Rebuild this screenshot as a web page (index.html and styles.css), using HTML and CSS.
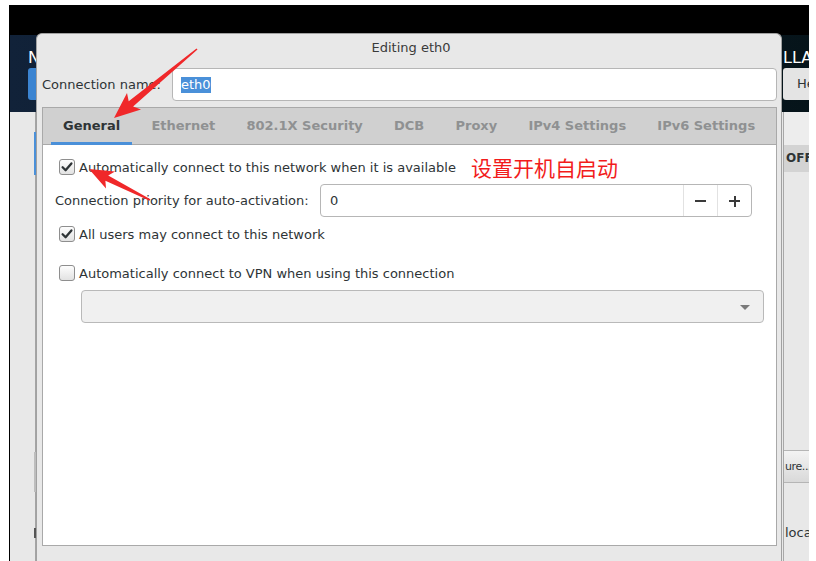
FILE: index.html
```html
<!DOCTYPE html>
<html>
<head>
<meta charset="utf-8">
<title>Editing eth0</title>
<link rel="stylesheet" href="styles.css">
</head>
<body>
<div class="frame">
  <div class="installer">
    <header class="inst-head">
      <div class="head-left">
        <div class="head-title">NETWORK &amp; HOST NAME</div>
        <div class="done-btn">Done</div>
      </div>
      <div class="head-right">
        <div class="head-title">LLATION</div>
        <div class="help-btn">Help!</div>
      </div>
    </header>
    <div class="inst-body">
      <div class="left-pane">
        <div class="mark mark-blue"></div>
        <div class="mark mark-grey"></div>
        <div class="mark mark-dark"></div>
      </div>
      <div class="center-pane"></div>
      <div class="right-pane">
        <div class="rp-top"></div>
        <div class="rp-head">OFF</div>
        <div class="rp-fill"></div>
        <div class="rp-btn">ure...</div>
        <div class="rp-text">localhost</div>
      </div>
    </div>
  </div>

  <div class="dialog">
    <div class="titlebar">Editing eth0</div>
    <div class="name-row">
      <div class="name-label">Connection name:</div>
      <div class="name-input"><span class="sel">eth0</span></div>
    </div>
    <div class="notebook">
      <div class="tabs">
        <div class="tab active">General</div>
        <div class="tab">Ethernet</div>
        <div class="tab">802.1X Security</div>
        <div class="tab">DCB</div>
        <div class="tab">Proxy</div>
        <div class="tab">IPv4 Settings</div>
        <div class="tab">IPv6 Settings</div>
      </div>
      <div class="page">
        <div class="row check-row">
          <span class="check on"><svg viewBox="0 0 16 16" width="16" height="16"><path d="M3.6 8.2 L6.6 11.2 L12.4 4.4" fill="none" stroke="#2e3436" stroke-width="2.3" stroke-linecap="round" stroke-linejoin="round"/></svg></span>
          <span class="check-label">Automatically connect to this network when it is available</span>
          <span class="annot">设置开机自启动</span>
        </div>
        <div class="row spin-row">
          <div class="spin-label">Connection priority for auto-activation:</div>
          <div class="spin">
            <div class="spin-value">0</div>
            <div class="spin-btn"><span class="minus"></span></div>
            <div class="spin-btn"><span class="plus"></span></div>
          </div>
        </div>
        <div class="row check-row">
          <span class="check on"><svg viewBox="0 0 16 16" width="16" height="16"><path d="M3.6 8.2 L6.6 11.2 L12.4 4.4" fill="none" stroke="#2e3436" stroke-width="2.3" stroke-linecap="round" stroke-linejoin="round"/></svg></span>
          <span class="check-label">All users may connect to this network</span>
        </div>
        <div class="row check-row vpn-row">
          <span class="check"></span>
          <span class="check-label">Automatically connect to VPN when using this connection</span>
        </div>
        <div class="combo"><span class="combo-arrow"></span></div>
      </div>
    </div>
  </div>
</div>

<svg class="arrows" viewBox="0 0 816 561" width="816" height="561">
  <polygon fill="#f0282a" points="114,118 141,109.6 133.1,106.6 197.5,49.6 196.5,48.4 128.7,101.2 127,93"/>
  <polygon fill="#f0282a" points="89,169 106,188.5 105.4,180.8 149.6,200.7 150.4,199.3 108.2,175.4 115,171.5"/>
</svg>
</body>
</html>
```

FILE: styles.css
```css
* { box-sizing: border-box; }
html, body { margin: 0; padding: 0; background: #fff; }
body {
  width: 816px;
  height: 561px;
  overflow: hidden;
  position: relative;
  font-family: "DejaVu Sans", sans-serif;
  font-size: 13px;
  color: #2e3436;
}

/* background installer screen */
.frame {
  position: relative;
  margin: 5px 0 0 9px;
  width: 800px;
  height: 556px;
  background: #000;
  padding: 30px 0 0 1px;
  overflow: hidden;
}
.installer { height: 526px; display: flex; flex-direction: column; }
.inst-head {
  height: 77px;
  flex: none;
  background: linear-gradient(90deg, #112239, #0b1a27 60%, #06141a);
  display: flex;
  justify-content: space-between;
  padding-top: 13px;
}
.head-left { padding-left: 18px; width: 200px; overflow: hidden; }
.head-title {
  color: #fff;
  font-size: 16px;
  line-height: 20px;
  height: 20px;
  white-space: nowrap;
  overflow: hidden;
}
.done-btn {
  width: 70px;
  height: 32px;
  background: #3b84d1;
  border-radius: 3px;
  color: #fff;
  line-height: 32px;
  text-align: center;
}
.head-right { width: 26px; overflow: hidden; }
.help-btn {
  width: 26px;
  height: 32px;
  background: #e4e4e4;
  border-radius: 3px 0 0 3px;
  color: #2e3436;
  line-height: 32px;
  padding-left: 14px;
  white-space: nowrap;
  overflow: hidden;
}
.inst-body { flex: 1; display: flex; background: #e8e8e8; }
.left-pane {
  width: 26px;
  border-right: 1px solid #a4a4a4;
  display: flex;
  flex-direction: column;
  align-items: flex-end;
}
.mark { width: 2px; margin-right: -1px; }
.mark-blue { margin-top: 20px; height: 43px; background: #4a90d9; }
.mark-grey { margin-top: 277px; height: 40px; background: #bdbdbd; }
.mark-dark { margin-top: 36px; height: 10px; background: #555; }
.center-pane { flex: 1; }
.right-pane {
  width: 26px;
  border-left: 1px solid #a8a8a8;
  display: flex;
  flex-direction: column;
  overflow: hidden;
  white-space: nowrap;
}
.rp-top { height: 33px; background: #ededed; }
.rp-head {
  height: 27px;
  background: #d3d3d3;
  font-weight: bold;
  font-size: 12px;
  line-height: 27px;
  padding-left: 2px;
  overflow: hidden;
}
.rp-fill { height: 278px; }
.rp-btn {
  height: 33px;
  background: linear-gradient(#f3f3f3, #d9d9d9);
  border-top: 1px solid #b5b5b5;
  border-bottom: 1px solid #b5b5b5;
  line-height: 31px;
  font-size: 11px;
  letter-spacing: -0.4px;
  padding-left: 1px;
  overflow: hidden;
}
.rp-text { margin-top: 40px; line-height: 20px; padding-left: 1px; overflow: hidden; }

/* dialog window */
.dialog {
  position: absolute;
  left: 27px;
  top: 28px;
  width: 746px;
  height: 530px;
  background: #e8e8e8;
  border: 1px solid #a1a1a1;
  border-bottom: none;
  border-radius: 6px 6px 0 0;
  padding: 0 4px 0 5px;
  display: flex;
  flex-direction: column;
  z-index: 2;
}
.titlebar {
  height: 27px;
  line-height: 27px;
  text-align: center;
  color: #3a3a3a;
  padding-left: 3px;
}
.name-row {
  margin-top: 7px;
  height: 33px;
  display: flex;
  align-items: center;
}
.name-label { width: 130px; }
.name-input {
  flex: 1;
  height: 33px;
  background: #fff;
  border: 1px solid #b6b6b6;
  border-radius: 4px;
  padding-left: 8px;
  display: flex;
  align-items: center;
}
.sel { background: #4a90d9; color: #fff; line-height: 16px; }

.notebook {
  margin-top: 6px;
  height: 439px;
  border: 1px solid #a9a9a9;
  background: #fff;
  display: flex;
  flex-direction: column;
}
.tabs {
  height: 37px;
  flex: none;
  background: #d0d0d0;
  border-bottom: 1px solid #a9a9a9;
  display: flex;
  gap: 7.2px;
  padding-left: 8px;
}
.tab {
  display: flex;
  align-items: center;
  padding: 0 12px;
  height: 37px;
  border-bottom: 3px solid transparent;
  font-weight: bold;
  color: #8f9192;
  white-space: nowrap;
}
.tab.active { color: #2e3436; border-bottom-color: #4a90d9; }

.page { padding: 10px 12px 0 12px; display: flex; flex-direction: column; }
.row { display: flex; align-items: center; }
.check-row { height: 24px; padding-left: 4px; gap: 4px; }
.check-row + .spin-row, .spin-row + .check-row { margin-top: 5px; }
.vpn-row { margin-top: 15px; }
.check {
  width: 16px;
  height: 16px;
  border: 1px solid #8e8e8e;
  border-radius: 3px;
  background: linear-gradient(#fdfdfd, #e2e2e2);
  display: flex;
  align-items: center;
  justify-content: center;
  flex: none;
}
.check svg { display: block; margin: -1px; }
.annot {
  margin-left: 11px;
  font-family: "Noto Sans CJK SC", sans-serif;
  font-size: 21px;
  line-height: 24px;
  color: #f21c1c;
}
.spin-row { height: 33px; }
.spin-label { width: 265px; white-space: nowrap; }
.spin {
  flex: 1;
  margin-right: 12px;
  height: 33px;
  border: 1px solid #b6b6b6;
  border-radius: 4px;
  background: #fff;
  display: flex;
}
.spin-value { flex: 1; padding-left: 9px; line-height: 31px; }
.spin-btn {
  width: 34px;
  border-left: 1px solid #e2e2e2;
  position: relative;
}
.minus, .plus { position: absolute; left: 11px; top: 15px; width: 11px; height: 2px; background: #3a3a3a; }
.plus::after { content: ""; position: absolute; left: 4.5px; top: -4.5px; width: 2px; height: 11px; background: #3a3a3a; }
.combo {
  margin-top: 5px;
  margin-left: 26px;
  height: 33px;
  background: #f0f0f0;
  border: 1px solid #b9b9b9;
  border-radius: 4px;
  position: relative;
}
.combo-arrow {
  position: absolute;
  right: 13px;
  top: 14px;
  border-left: 5px solid transparent;
  border-right: 5px solid transparent;
  border-top: 5px solid #7a7a7a;
}

.arrows {
  position: absolute;
  left: 0;
  top: 0;
  z-index: 5;
  pointer-events: none;
}
```
